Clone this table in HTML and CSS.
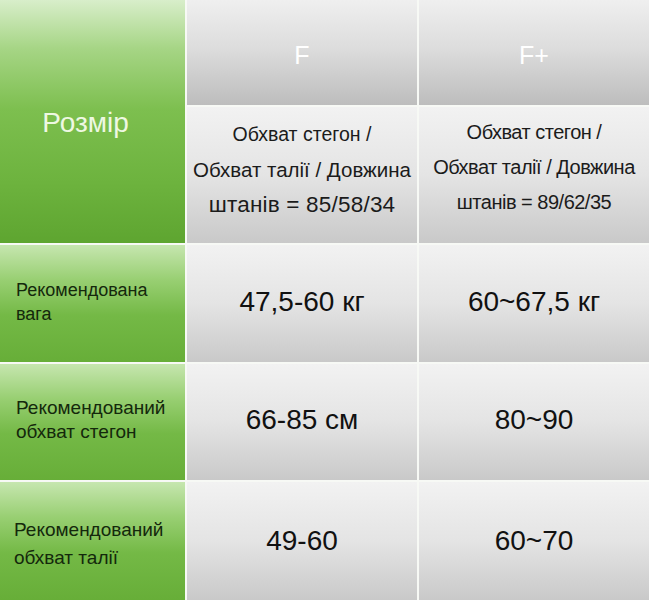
FILE: index.html
```html
<!DOCTYPE html>
<html lang="uk">
<head>
<meta charset="utf-8">
<link rel="stylesheet" href="styles.css">
</head>
<body>
<div class="table">
  <div class="cell green size-label">Розмір</div>
  <div class="cell gray head">F</div>
  <div class="cell gray head">F+</div>
  <div class="cell light desc desc-f">
    <span class="first">Обхват стегон /</span>
    <span>Обхват талії / Довжина</span>
    <span class="big">штанів = 85/58/34</span>
  </div>
  <div class="cell light desc desc-fp">
    <span>Обхват стегон /</span>
    <span>Обхват талії / Довжина</span>
    <span>штанів = 89/62/35</span>
  </div>

  <div class="cell green label">Рекомендована<br>вага</div>
  <div class="cell light value">47,5-60 кг</div>
  <div class="cell light value">60~67,5 кг</div>

  <div class="cell green label label-2">Рекомендований<br>обхват стегон</div>
  <div class="cell light value">66-85 см</div>
  <div class="cell light value">80~90</div>

  <div class="cell green label label-3">Рекомендований<br>обхват талії</div>
  <div class="cell light value value-3">49-60</div>
  <div class="cell light value value-3">60~70</div>
</div>
</body>
</html>
```

FILE: styles.css
```css
html, body {
  margin: 0;
  padding: 0;
  background: #f7f9f5;
}
body {
  width: 649px;
  height: 600px;
  overflow: hidden;
  font-family: "Liberation Sans", Arial, sans-serif;
}
.table {
  display: grid;
  grid-template-columns: 185px 230px 230px;
  grid-template-rows: 105px 136px 117px 116px 118px;
  gap: 2px;
}
.cell {
  display: flex;
  align-items: center;
  justify-content: center;
  box-sizing: border-box;
}
.green {
  background: linear-gradient(to bottom, #c6e6af 0%, #98cf72 30%, #74b946 60%, #67ae38 100%);
}
.size-label {
  grid-row: 1 / 3;
  color: #eef8e2;
  font-size: 28px;
  padding-right: 14px;
  padding-top: 2px;
}
.size-label.green {
  background: linear-gradient(to bottom, #d8eeca 0%, #a6d585 20%, #7dbf4f 45%, #6db33e 75%, #5ea530 100%);
}
.gray {
  background: linear-gradient(to bottom, #efefef 0%, #dddddd 45%, #bdbdbd 100%);
}
.light {
  background: linear-gradient(to bottom, #f2f2f2 0%, #e4e4e4 50%, #c9c9c9 100%);
}
.head {
  color: #ffffff;
  font-size: 25px;
  padding-top: 5px;
}
.desc {
  flex-direction: column;
  color: #1b1b1b;
  line-height: 35px;
  padding-bottom: 12px;
}
.desc-f {
  font-size: 20.5px;
}
.desc-f .first {
  font-size: 19.5px;
}
.desc-f .big {
  font-size: 22.5px;
  letter-spacing: 0.2px;
}
.desc-fp {
  font-size: 20px;
  letter-spacing: -0.5px;
  padding-bottom: 16px;
}
.label {
  justify-content: flex-start;
  padding-left: 16px;
  color: #14280c;
  font-size: 18px;
  line-height: 24px;
  padding-bottom: 4px;
}
.label-2 {
  font-size: 19px;
}
.label-3 {
  font-size: 19px;
  padding-left: 14px;
  line-height: 28px;
  padding-bottom: 0;
  padding-top: 6px;
}
.value {
  color: #111111;
  font-size: 28px;
  padding-bottom: 4px;
}
.value-3 {
  padding-bottom: 0;
}
```
